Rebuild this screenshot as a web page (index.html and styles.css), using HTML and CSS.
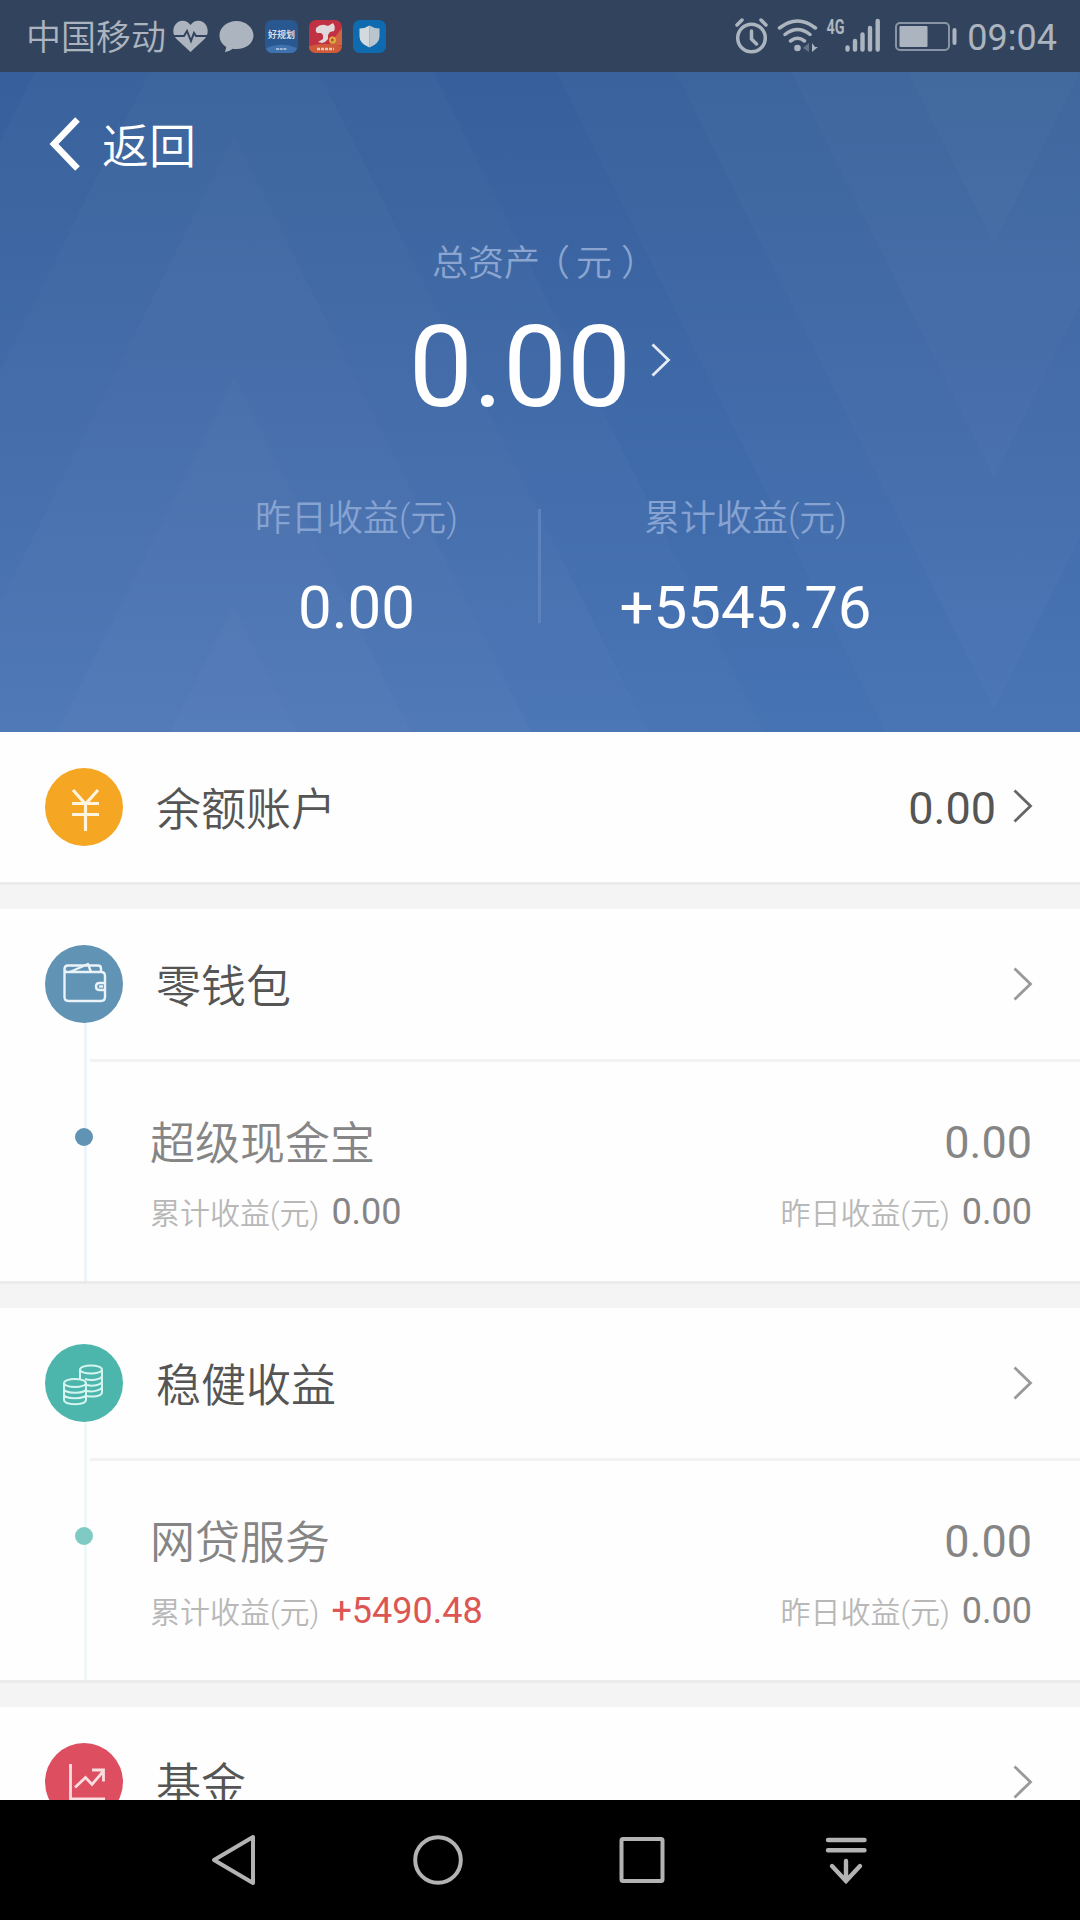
FILE: index.html
```html
<!DOCTYPE html>
<html lang="zh-CN">
<head>
    <meta charset="UTF-8">
    <meta name="viewport" content="width=device-width, initial-scale=1.0">
    <title>总资产</title>
    <link rel="stylesheet" href="styles.css">
</head>
<body>
    <div class="screen">
        <div class="status-bar">
            <div class="status-left">
                <span class="carrier">中国移动</span>
                <svg width="35" height="33" viewBox="0 0 35 33">
                    <path fill="#acb5bf" d="M17.500 32 3 18.500C-1.500 13 0 5 5 2c4.500-2.600 9.500-1.300 12.500 3C20.500.700 25.500-.600 30 2c5 3 6.500 11 2 16.500z"/>
                    <path fill="none" stroke="#32445d" stroke-width="2" d="M0 16h11l3-5 4 10 3-8 2 3h12"/>
                </svg>
                <svg width="35" height="33" viewBox="0 0 35 33">
                    <path fill="#acb5bf" d="M17.500 1C8 1 .500 7.500.500 15.500c0 5 2.700 9 6.800 11.500-.300 2-.800 3.600-1.500 5 3.500-.500 6-1.700 8-3.200 1.200.200 2.400.300 3.700.300 9.500 0 17-6 17-13.600S27 1 17.500 1z"/>
                </svg>
                <svg width="33" height="33" viewBox="0 0 33 33">
                    <rect width="33" height="33" rx="7" fill="#29578f"/>
                    <path fill="#3f72ae" d="M1 28q15.500-7 31 0-1 5-7 5H8q-6 0-7-5z"/>
                    <text class="app-name" x="16.500" y="18" text-anchor="middle">好规划</text>
                    <path stroke="#9db9d9" stroke-width="2" stroke-dasharray="3 .7" d="M11 29h11"/>
                </svg>
                <svg width="33" height="33" viewBox="0 0 33 33">
                    <rect width="33" height="33" rx="7" fill="#c23043"/>
                    <path fill="#d0643f" d="m33 8-13 17h13z"/>
                    <path fill="#cf5a3a" d="M0 26q16-4 33 0-1 7-7 7H7q-7 0-7-7z"/>
                    <path fill="#dfd9dc" d="M7 8q4-4 9-3l3 1 5-3q3 4 1 8l-4 1-2 3 0 4-3 3-3 1-4-1 5-3 0-4-2-2-4 0q-2-2-1-5z"/>
                    <circle cx="23.500" cy="20" r="2.500" fill="none" stroke="#dcae3b" stroke-width="2"/>
                    <path stroke="#e6c9b8" stroke-width="2.500" stroke-dasharray="3 1" d="M8 29h17"/>
                </svg>
                <svg width="33" height="33" viewBox="0 0 33 33">
                    <rect width="33" height="33" rx="7" fill="#0f6bb0"/>
                    <path fill="#b9c6cf" d="M16.500 5.500q4.500 3 10 3v8q0 7-10 11z"/>
                    <path fill="#d3dadd" d="M16.500 5.500q-4.500 3-10 3v8q0 7 10 11z"/>
                </svg>
            </div>
            <div class="status-right">
                <svg width="222" height="40" viewBox="0 0 222 40">
                    <g fill="none" stroke="#acb5bf" stroke-width="3.500" stroke-linecap="round">
                        <circle cx="16.500" cy="22" r="13.800"/>
                        <path d="M16.500 15v8l5 5M2 9l5-5M31 9l-5-5"/>
                        <path d="M44.500 12q18-14 36 0M50 18.500q12.500-10 25 0M55.500 25q7-5.500 14 0"/>
                    </g>
                    <circle cx="62.500" cy="32" r="3.300" fill="#acb5bf"/>
                    <path fill="#64758a" d="m68 32 6-5v9z"/>
                    <path fill="#acb5bf" d="M77 27v9l6-5h-3z"/>
                    <text class="net-type" x="91.500" y="18" textLength="18" lengthAdjust="spacingAndGlyphs">4G</text>
                    <path stroke="#acb5bf" stroke-width="4.400" stroke-linecap="round" d="M112.500 31.500v2M120 25v8.500M127.500 18.500v15M135 12v21.500M142.700 5v28.500"/>
                    <rect x="161" y="7" width="53" height="27" rx="4" fill="none" stroke="#8995a4" stroke-width="2"/>
                    <rect x="164.500" y="10" width="28" height="21" rx="1" fill="#acb5bf"/>
                    <path stroke="#acb5bf" stroke-width="4" stroke-linecap="round" d="M219.500 14v13"/>
                </svg>
                <span class="time">09:04</span>
            </div>
        </div>

        <div class="header">
            <svg class="pattern" width="1080" height="660" viewBox="0 72 1080 660">
                <g fill="#fff" fill-opacity="0.019">
                    <path d="m234-327 530 1060h-1060z"/>
                    <path d="m234-97 415 830h-830z"/>
                    <path d="m234 136 298 597h-597z"/>
                    <path d="m234 377 178 356H56z"/>
                    <path d="m234 606 63 127H170z"/>
                    <path d="M994 948 556 72h876z"/>
                    <path d="M994 710 675 72h638z"/>
                    <path d="M994 478 791 72h406z"/>
                    <path d="M994 244 908 72h172z"/>
                </g>
            </svg>
            <div class="back">
                <svg width="32" height="54" viewBox="0 0 32 54">
                    <path fill="none" stroke="#fff" stroke-width="6.500" d="M28.500 2.500 5 27l23.500 24.500"/>
                </svg>
                <span>返回</span>
            </div>
            <div class="total-label">总资产<span class="paren-open">（</span>元<span class="paren-close">）</span></div>
            <div class="total">
                <span>0.00</span>
                <svg width="20" height="34" viewBox="0 0 20 34">
                    <path fill="none" stroke="#e4ebf5" stroke-width="2.800" d="m1.500 1.500 16 15.500-16 15.500"/>
                </svg>
            </div>
            <div class="stats">
                <div class="stat stat-left">
                    <div class="stat-label">昨日收益(元)</div>
                    <div class="stat-value">0.00</div>
                </div>
                <div class="divider"></div>
                <div class="stat stat-right">
                    <div class="stat-label">累计收益(元)</div>
                    <div class="stat-value">+5545.76</div>
                </div>
            </div>
        </div>

        <div class="list">
            <div class="section">
                <div class="row">
                    <svg class="icon" width="78" height="78" viewBox="0 0 78 78">
                        <circle cx="39" cy="39" r="39" fill="#f5a623"/>
                        <path fill="none" stroke="#fff5df" stroke-width="3.200" d="m28 22 12.500 14L53 22M27 35.500h27M27 46.500h27M40.500 35v28"/>
                    </svg>
                    <span class="name">余额账户</span>
                    <span class="amount">0.00</span>
                    <svg class="arrow dark" width="20" height="34" viewBox="0 0 20 34"><path d="m1.500 1.500 16 15.500-16 15.500"/></svg>
                </div>
            </div>

            <div class="section wallet">
                <div class="row">
                    <svg class="icon" width="78" height="78" viewBox="0 0 78 78">
                        <circle cx="39" cy="39" r="39" fill="#6193b5"/>
                        <g fill="none" stroke="#e9f3f9" stroke-width="2.400" stroke-linejoin="round">
                            <path d="M19.500 24v28q0 4 4 4H56q4 0 4-4V31q0-4-4-4H22q-2.500 0-2.500-3t3-3.500H53q3 0 3 3V27"/>
                            <path d="m25 27 18-8 3 8"/>
                            <path d="M60 38h-5.500q-3.500 0-3.500 3.500t3.500 3.500H60"/>
                            <path d="M54 41.500h4"/>
                        </g>
                    </svg>
                    <span class="name">零钱包</span>
                    <svg class="arrow" width="20" height="34" viewBox="0 0 20 34"><path d="m1.500 1.500 16 15.500-16 15.500"/></svg>
                </div>
                <div class="product">
                    <div class="line line-main">
                        <span>超级现金宝</span>
                        <span class="value">0.00</span>
                    </div>
                    <div class="line line-sub">
                        <div class="pair"><span>累计收益(元)</span><b>0.00</b></div>
                        <div class="pair"><span>昨日收益(元)</span><b>0.00</b></div>
                    </div>
                </div>
            </div>

            <div class="section steady">
                <div class="row">
                    <svg class="icon" width="78" height="78" viewBox="0 0 78 78">
                        <circle cx="39" cy="39" r="39" fill="#4db6ac"/>
                        <g fill="none" stroke="#d5f5f0" stroke-width="2">
                            <ellipse cx="46" cy="25.500" rx="11" ry="4"/>
                            <path d="M35 25.500V36M57 25.500V48c0 5-11 5-15 4M57 32c-1 4-12 5-17 3M57 37.500c-1 4-10 5-15 3.500M57 43c-1 4-11 5-15 4"/>
                            <ellipse cx="30" cy="39" rx="11" ry="4"/>
                            <path d="M19 39v17c0 5.500 22 5.500 22 0V39M19 45c0 5 22 5 22 0M19 50.500c0 5 22 5 22 0"/>
                        </g>
                    </svg>
                    <span class="name">稳健收益</span>
                    <svg class="arrow" width="20" height="34" viewBox="0 0 20 34"><path d="m1.500 1.500 16 15.500-16 15.500"/></svg>
                </div>
                <div class="product">
                    <div class="line line-main">
                        <span>网贷服务</span>
                        <span class="value">0.00</span>
                    </div>
                    <div class="line line-sub">
                        <div class="pair"><span>累计收益(元)</span><b class="up">+5490.48</b></div>
                        <div class="pair"><span>昨日收益(元)</span><b>0.00</b></div>
                    </div>
                </div>
            </div>

            <div class="section">
                <div class="row">
                    <svg class="icon" width="78" height="78" viewBox="0 0 78 78">
                        <circle cx="39" cy="39" r="39" fill="#dd4f60"/>
                        <path fill="none" stroke="#fbdde0" stroke-width="2.800" d="M25.500 21v35H60M30 44.500l10.500-10 6.500 7L58.500 28M47 27h11.500v11.500"/>
                    </svg>
                    <span class="name">基金</span>
                    <svg class="arrow" width="20" height="34" viewBox="0 0 20 34"><path d="m1.500 1.500 16 15.500-16 15.500"/></svg>
                </div>
            </div>
        </div>

        <div class="nav-bar">
            <svg width="50" height="56" viewBox="0 0 50 56">
                <path fill="none" stroke="#b3b3b3" stroke-width="4" stroke-linejoin="round" d="M44 5v46L5 28z"/>
            </svg>
            <svg width="50" height="56" viewBox="0 0 50 56">
                <circle cx="25" cy="28" r="22.800" fill="none" stroke="#b3b3b3" stroke-width="4"/>
            </svg>
            <svg width="50" height="56" viewBox="0 0 50 56">
                <rect x="4.500" y="7" width="41" height="42" rx="1.500" fill="none" stroke="#b3b3b3" stroke-width="4"/>
            </svg>
            <svg width="50" height="56" viewBox="0 0 50 56">
                <path fill="none" stroke="#b3b3b3" stroke-width="4.400" stroke-linecap="round" d="M7 8h36.500M7 18.300h36.500M25 29v20M11 34l14 15 14-15"/>
            </svg>
        </div>
    </div>
</body>
</html>
```

FILE: styles.css
```css
* {
    box-sizing: border-box;
}

body {
    margin: 0;
    background-color: #000;
    font-family: Roboto, "Noto Sans CJK SC", sans-serif;
    overflow: hidden;
}

svg {
    display: block;
    flex-shrink: 0;
}

.screen {
    width: 1080px;
    height: 1920px;
    display: flex;
    flex-direction: column;
    overflow: hidden;
}

/* status bar */
.status-bar {
    flex: none;
    height: 72px;
    padding: 0 23px 0 26px;
    background-color: #32445d;
    color: #acb5bf;
    display: flex;
    justify-content: space-between;
    align-items: center;
}

.status-left {
    display: flex;
    align-items: center;
    gap: 11px;
}

.carrier {
    font-size: 35px;
    font-weight: 350;
    line-height: 72px;
    margin-top: 5px;
    margin-right: -4px;
}

.app-name {
    font-size: 9px;
    font-weight: 700;
    fill: #d3dde8;
}

.status-right {
    display: flex;
    align-items: center;
    gap: 10px;
}

.net-type {
    font-size: 20px;
    font-weight: 700;
    fill: #acb5bf;
}

.time {
    font-size: 36px;
    line-height: 72px;
    margin-top: 4px;
}

/* blue header */
.header {
    flex: none;
    position: relative;
    height: 660px;
    background: linear-gradient(#375f9b, #4673b4);
    color: #fff;
}

.pattern {
    position: absolute;
    top: 0;
    left: 0;
}

.back,
.total-label,
.total,
.stats {
    position: relative;
}

.back {
    height: 150px;
    padding-left: 49px;
    display: flex;
    align-items: center;
    gap: 21px;
    font-size: 47px;
    font-weight: 350;
    line-height: 60px;
}

.back svg {
    margin-bottom: 6px;
}

.total-label {
    margin-top: 17px;
    font-size: 36px;
    font-weight: 350;
    line-height: 50px;
    text-align: center;
    color: #8ba5d0;
}

/* centre the full-width brackets in their box */
.paren-open {
    margin: 0 6px 0 -6px;
}

.paren-close {
    margin: 0 -9px 0 9px;
}

.total {
    margin-top: 23px;
    display: flex;
    justify-content: center;
    align-items: center;
    gap: 20px;
    font-size: 114px;
    line-height: 110px;
}

.total svg {
    margin-bottom: 14px;
}

.stats {
    margin-top: 72px;
    padding-left: 175px;
    display: flex;
}

.stat {
    text-align: center;
}

.stat-left {
    width: 363px;
}

.stat-right {
    width: 409px;
}

.stat-label {
    font-size: 36px;
    font-weight: 350;
    line-height: 50px;
    color: #87a3d2;
}

.stat-value {
    margin-top: 34px;
    font-size: 60px;
    line-height: 60px;
}

.divider {
    width: 3px;
    height: 114px;
    margin-top: 15px;
    background-color: #5b82bd;
}

/* account list */
.list {
    flex: 1;
    min-height: 0;
    overflow: hidden;
    background-color: #f4f4f4;
}

.section {
    position: relative;
    margin-bottom: 24px;
    background-color: #fefefe;
    border-bottom: 3px solid #ebebeb;
}

.row {
    position: relative;
    height: 150px;
    padding: 0 47px 0 45px;
    display: flex;
    align-items: center;
    color: #555;
}

.name {
    flex: 1;
    margin-left: 33px;
    font-size: 45px;
    font-weight: 350;
    line-height: 60px;
    padding-top: 7px;
}

.amount {
    margin-right: 17px;
    margin-top: 3px;
    font-size: 45px;
    line-height: 60px;
}

.arrow {
    fill: none;
    stroke: #999;
    stroke-width: 2.8;
}

.arrow.dark {
    stroke: #666;
    margin-bottom: 2px;
}

/* thin line that runs down from the section icon */
.wallet::before,
.steady::before {
    content: "";
    position: absolute;
    left: 84px;
    top: 75px;
    bottom: 0;
    width: 3px;
    background-color: #edf3f7;
}

.steady::before {
    background-color: #eff8f6;
}

.product {
    height: 222px;
    margin-left: 90px;
    padding: 53px 48px 0 60px;
    border-top: 3px solid #f2f2f2;
}

.product::before {
    content: "";
    position: absolute;
    left: 75px;
    top: 219px;
    width: 18px;
    height: 18px;
    border-radius: 50%;
    background-color: #6193b5;
}

.steady .product::before {
    background-color: #7fcac3;
}

.line {
    display: flex;
    justify-content: space-between;
}

.line-main {
    font-size: 45px;
    font-weight: 350;
    line-height: 60px;
    color: #858585;
}

.line-main .value {
    font-weight: 400;
    margin-top: -2px;
}

.line-sub {
    margin-top: 12px;
    line-height: 50px;
}

.pair {
    display: flex;
    align-items: baseline;
    gap: 12px;
    font-size: 30px;
    font-weight: 350;
    color: #b8b8b8;
}

.pair b {
    font-size: 36px;
    font-weight: 400;
    color: #858585;
}

.pair b.up {
    color: #dc5753;
}

/* android navigation bar */
.nav-bar {
    flex: none;
    height: 120px;
    padding: 0 209px;
    background-color: #000;
    display: flex;
    justify-content: space-between;
    align-items: center;
}
```
